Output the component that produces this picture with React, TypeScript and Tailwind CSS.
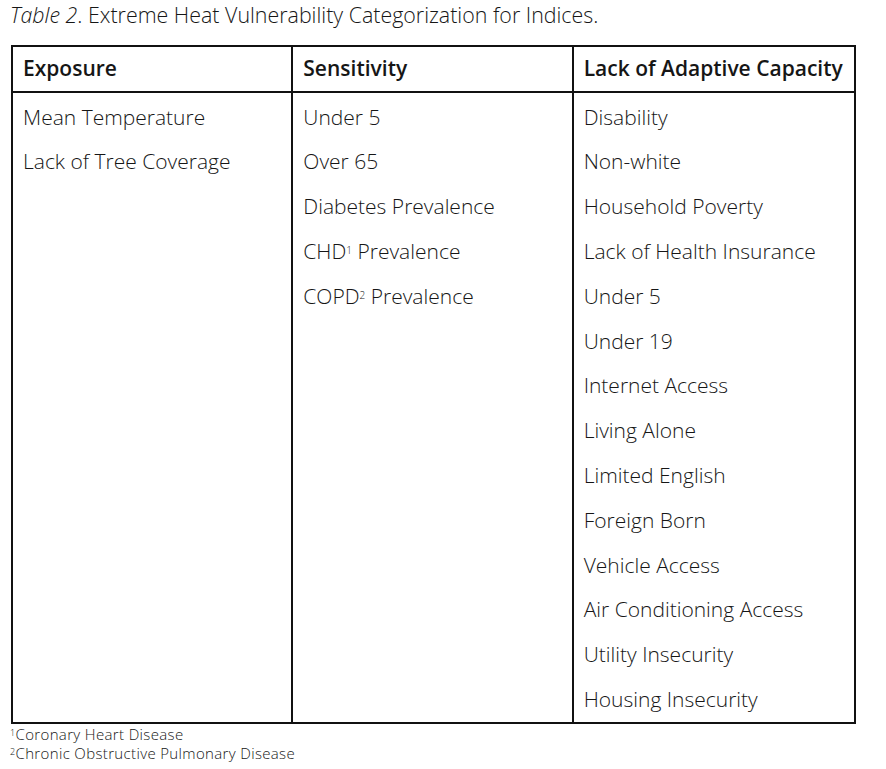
const exposure = ["Mean Temperature", "Lack of Tree Coverage"];

const sensitivity: React.ReactNode[] = [
  "Under 5",
  "Over 65",
  "Diabetes Prevalence",
  <span>
    CHD<sup className="text-[10px]">1</sup> Prevalence
  </span>,
  <span>
    COPD<sup className="text-[10px]">2</sup> Prevalence
  </span>,
];

const capacity = [
  "Disability",
  "Non-white",
  "Household Poverty",
  "Lack of Health Insurance",
  "Under 5",
  "Under 19",
  "Internet Access",
  "Living Alone",
  "Limited English",
  "Foreign Born",
  "Vehicle Access",
  "Air Conditioning Access",
  "Utility Insecurity",
  "Housing Insecurity",
];

function Column({ items, last }: { items: React.ReactNode[]; last?: boolean }) {
  return (
    <div className={`pt-[2px] pl-[10px] ${last ? "" : "border-r-2 border-[#111]"}`}>
      {items.map((item, i) => (
        <div key={i} className="h-[44.8px] flex items-center whitespace-nowrap">
          {item}
        </div>
      ))}
    </div>
  );
}

export default function App() {
  return (
    <div
      className="w-[886px] h-[769px] bg-white text-[#161616] pl-[10px] pt-[3px]"
      style={{ fontFamily: "'Open Sans', 'Liberation Sans', sans-serif" }}
    >
      <p className="text-[21.4px] leading-[24px] font-light">
        <i>Table 2</i>. Extreme Heat Vulnerability Categorization for Indices.
      </p>

      <div className="mt-[18px] ml-[1px] w-[845px] border-2 border-[#111] text-[21px] font-light">
        <div className="grid grid-cols-3 h-[46px] border-b-2 border-[#111] font-semibold">
          <div className="flex items-center pl-[10px] border-r-2 border-[#111]">Exposure</div>
          <div className="flex items-center pl-[10px] border-r-2 border-[#111]">Sensitivity</div>
          <div className="flex items-center pl-[10px] whitespace-nowrap">Lack of Adaptive Capacity</div>
        </div>
        <div className="grid grid-cols-3">
          <Column items={exposure} />
          <Column items={sensitivity} />
          <Column items={capacity} last />
        </div>
      </div>

      <div className="text-[15px] leading-[19px] mt-[1px] font-light tracking-[0.35px]">
        <p>
          <sup className="text-[9px]">1</sup>Coronary Heart Disease
        </p>
        <p>
          <sup className="text-[9px]">2</sup>Chronic Obstructive Pulmonary Disease
        </p>
      </div>
    </div>
  );
}
